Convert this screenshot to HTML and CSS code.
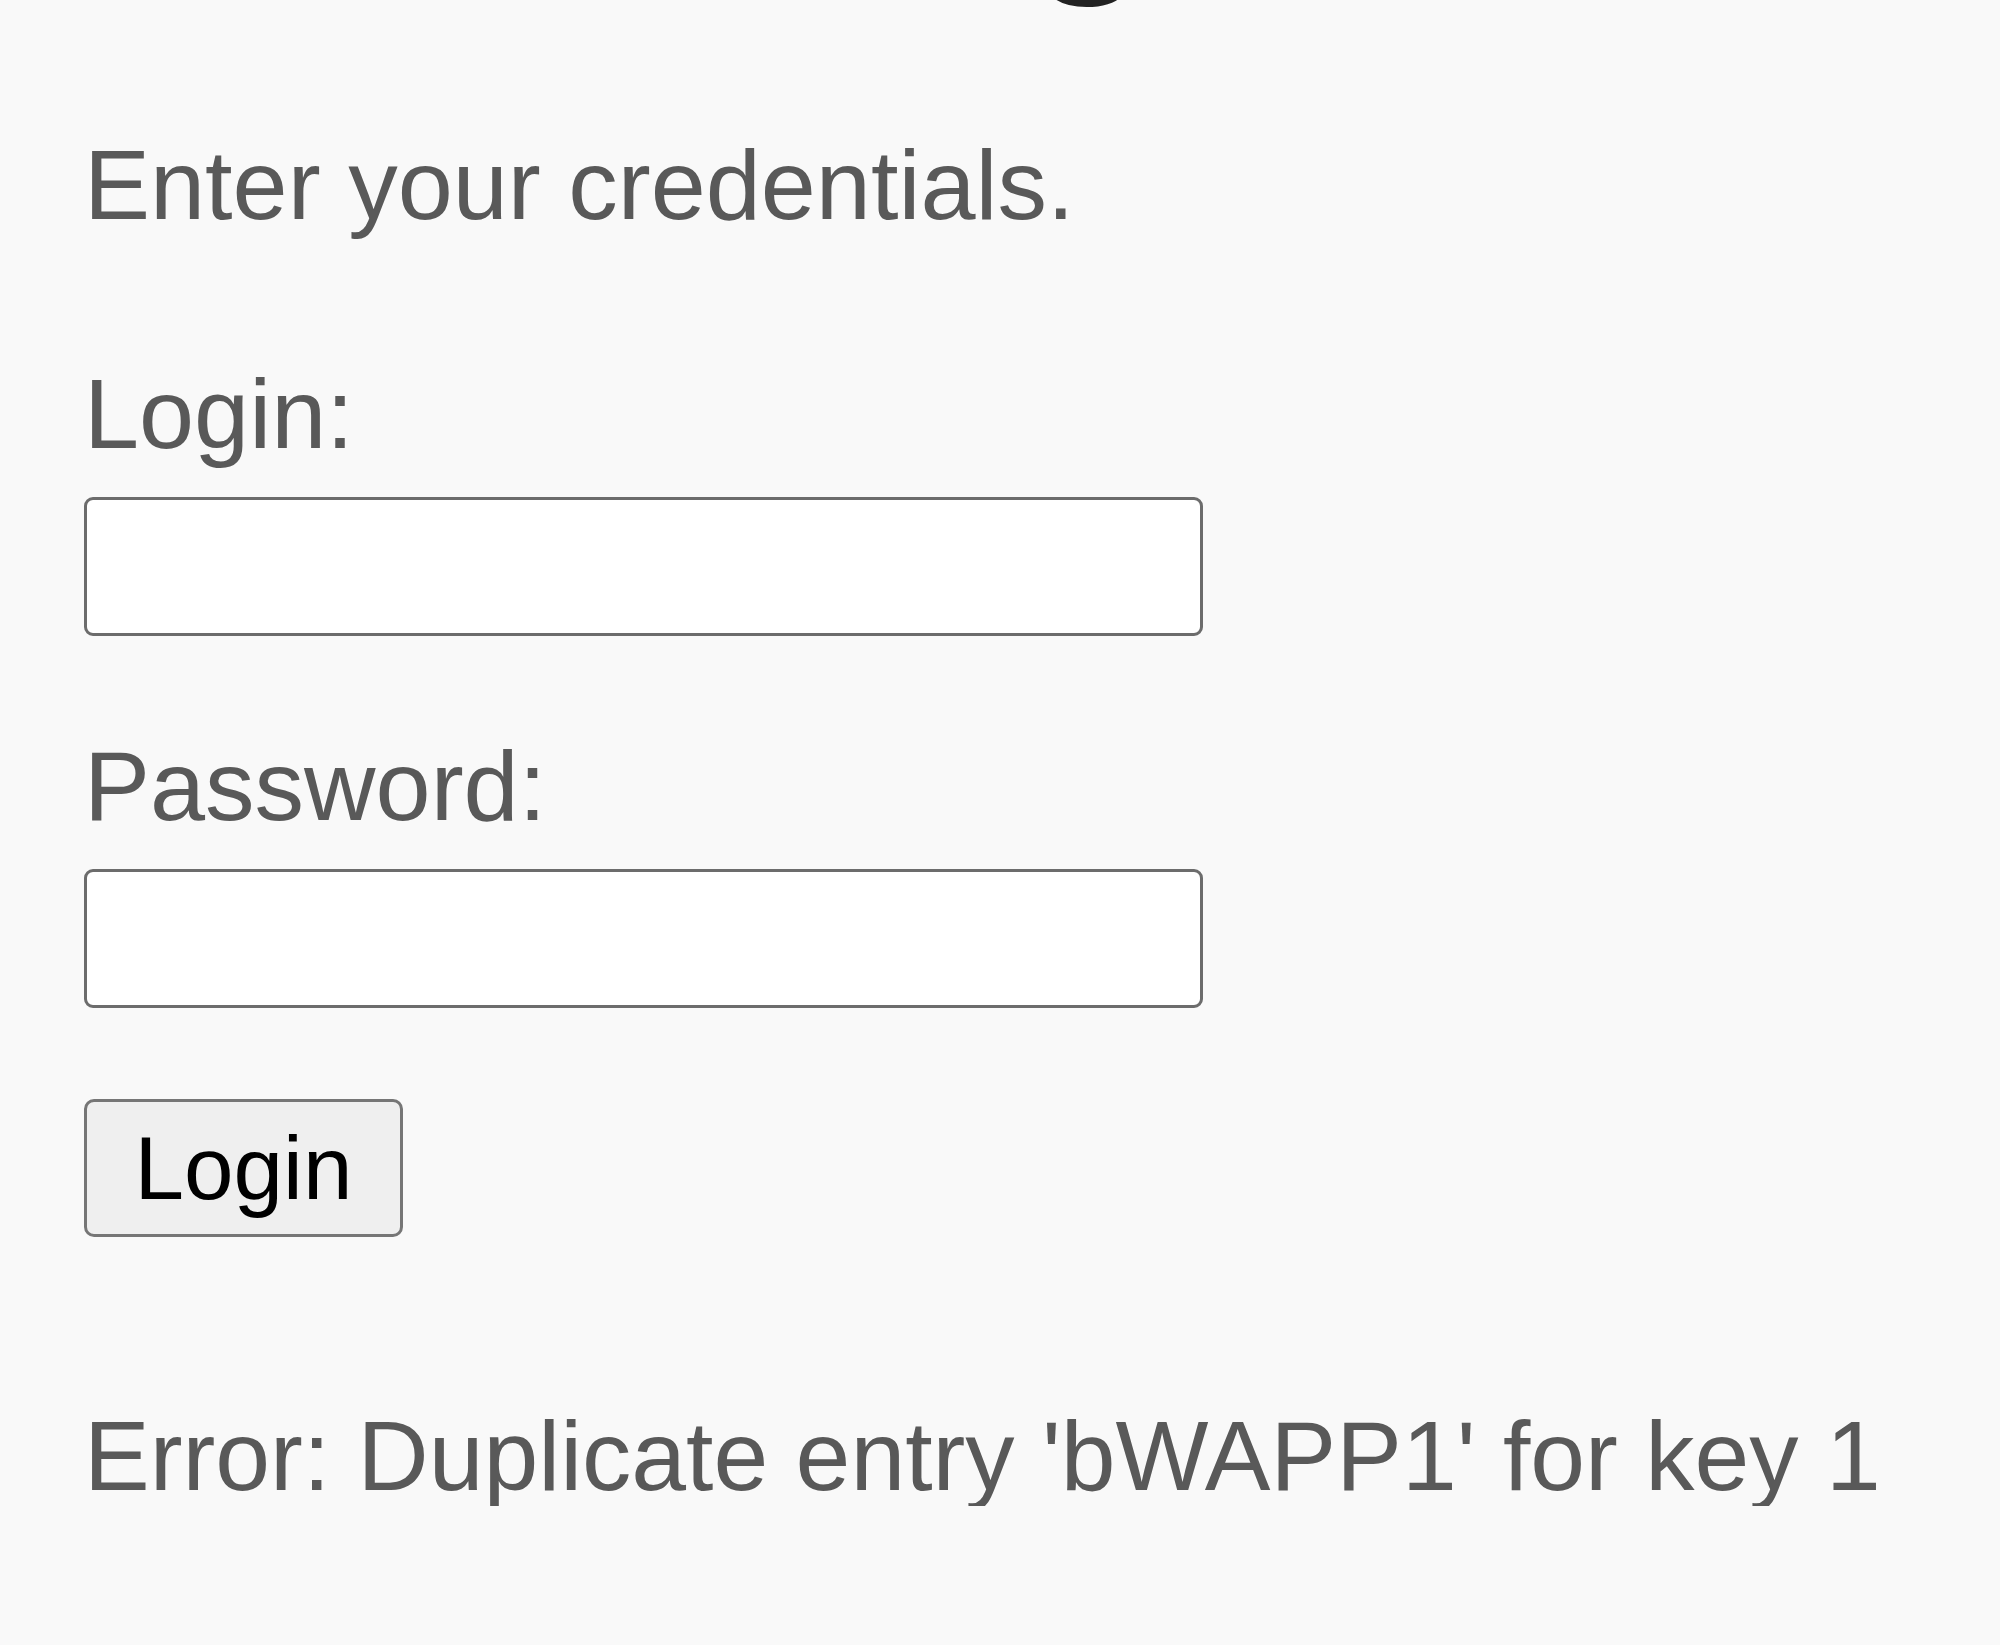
FILE: index.html
```html
<!DOCTYPE html>
<html lang="en">
<head>
<meta charset="utf-8">
<title>Login</title>
<link rel="stylesheet" href="styles.css">
</head>
<body>
<main class="page">
  <h1 class="title">Login</h1>
  <p class="intro">Enter your credentials.</p>
  <form class="login-form" action="#" method="post">
    <label class="field-label" for="login">Login:</label>
    <input class="field-input" type="text" id="login" name="login">
    <label class="field-label field-label--second" for="password">Password:</label>
    <input class="field-input" type="password" id="password" name="password">
    <button class="submit-btn" type="submit">Login</button>
  </form>
  <p class="error">Error: Duplicate entry 'bWAPP1' for key 1</p>
</main>
</body>
</html>
```

FILE: styles.css
```css
html, body {
  margin: 0;
  padding: 0;
  background: #f9f9f9;
}

body {
  font-family: "Liberation Sans", Arial, sans-serif;
  color: #595959;
  overflow: hidden;
}

.page {
  display: flex;
  flex-direction: column;
  align-items: flex-start;
  padding-left: 84px;
}

.title {
  margin: -200px 0 0 0;
  padding-left: 706px;
  font-size: 196px;
  line-height: 1;
  font-weight: bold;
  color: #222;
}

.intro {
  margin: 139px 0 0 0;
  font-size: 99px;
  line-height: 99px;
}

.login-form {
  display: flex;
  flex-direction: column;
  align-items: flex-start;
  margin-top: 130px;
}

.field-label {
  display: block;
  font-size: 99px;
  line-height: 99px;
}

.field-label--second {
  margin-top: 100px;
}

.field-input {
  box-sizing: border-box;
  display: block;
  width: 1119px;
  height: 139px;
  margin: 34px 0 0 0;
  padding: 0 10px;
  background: #ffffff;
  border: 3px solid #6c6c6c;
  border-radius: 9px;
  font-size: 90px;
  font-family: "Liberation Sans", Arial, sans-serif;
}

.submit-btn {
  box-sizing: border-box;
  margin-top: 91px;
  width: 319px;
  height: 138px;
  padding: 21px 0;
  background: #efefef;
  border: 3px solid #767676;
  border-radius: 10px;
  color: #000000;
  font-family: "Liberation Sans", Arial, sans-serif;
  font-size: 89px;
  line-height: 90px;
  text-align: center;
}

.error {
  margin: 170px 0 0 0;
  font-size: 98.5px;
  line-height: 99px;
}
```
